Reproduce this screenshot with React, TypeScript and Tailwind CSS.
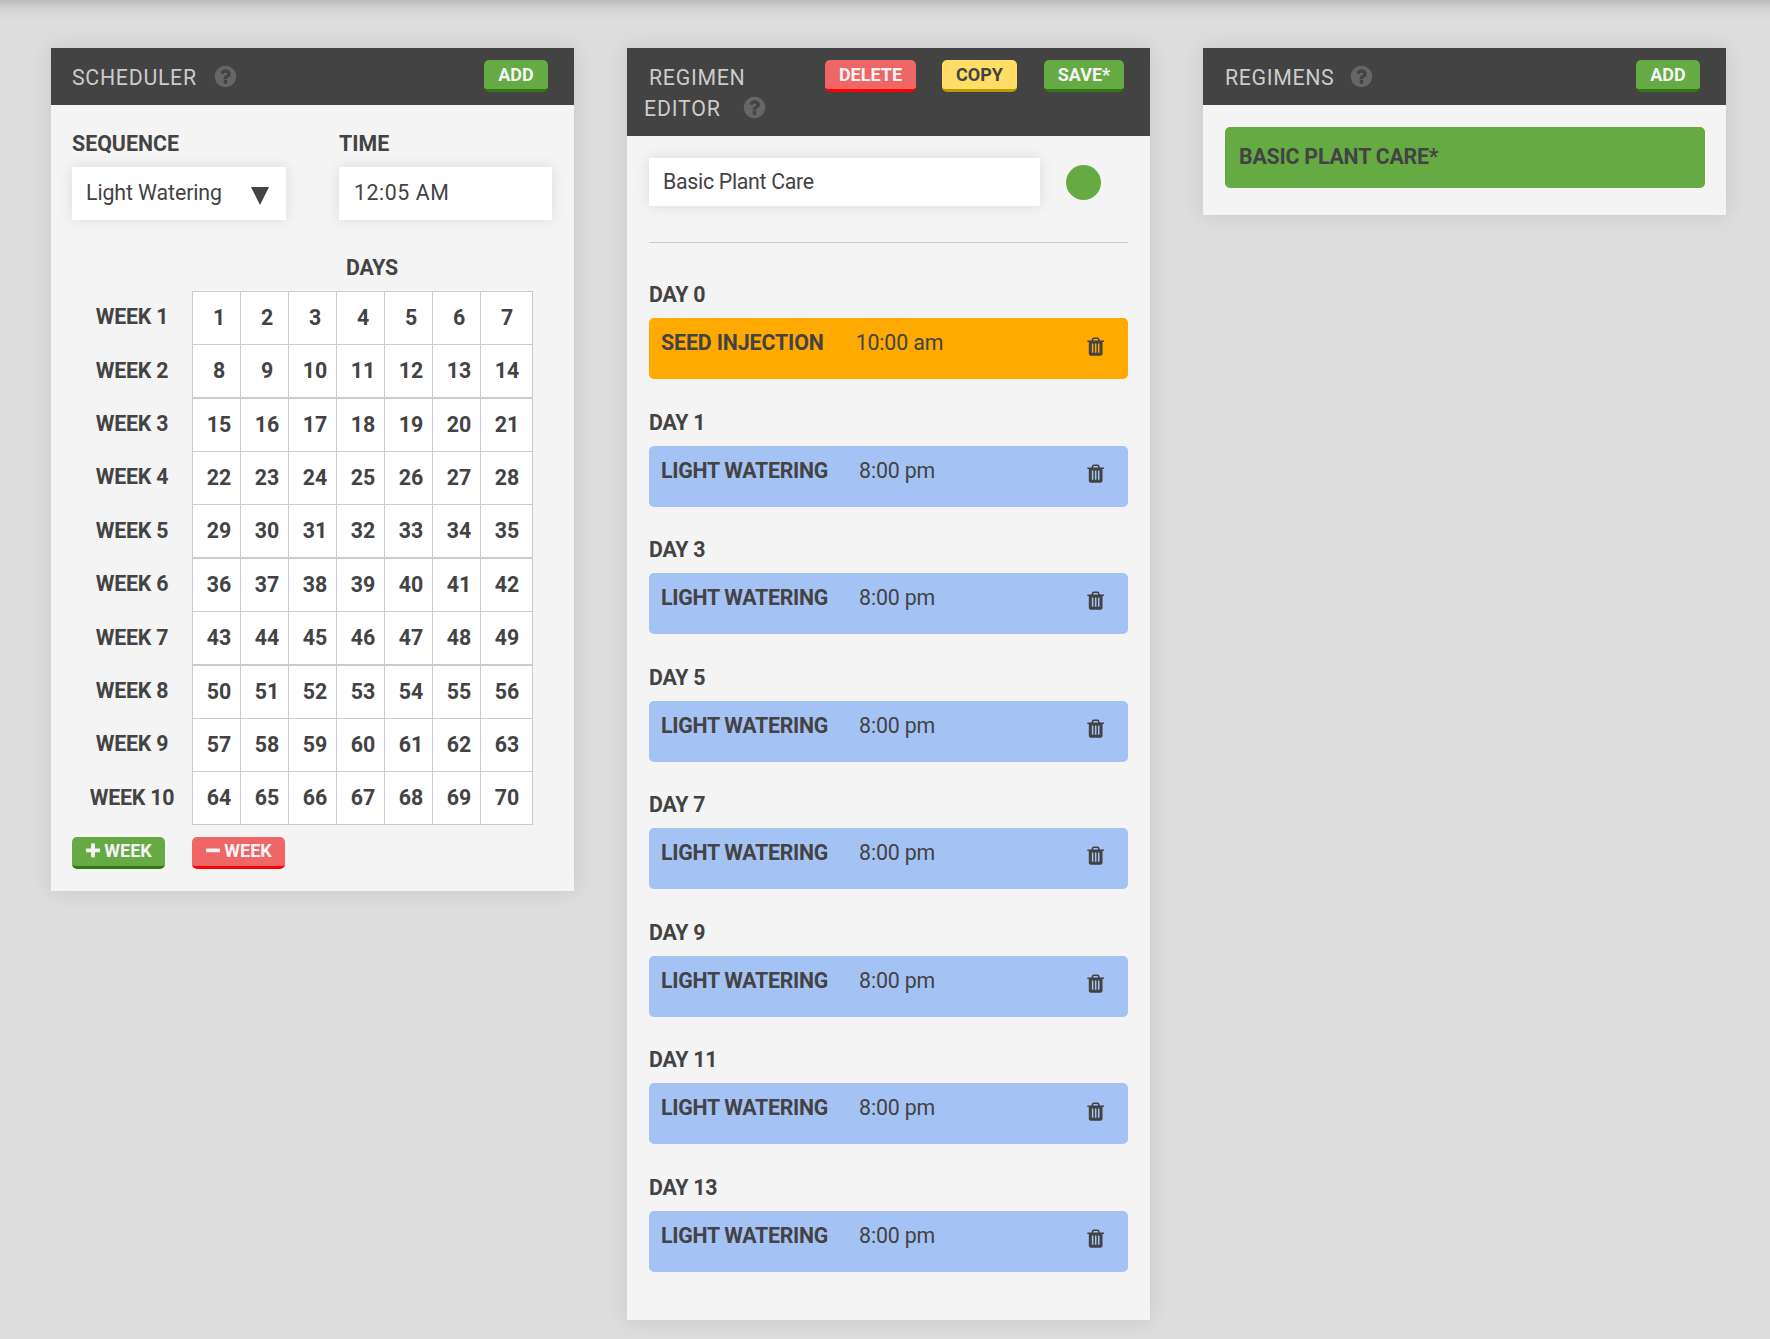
import React from 'react';

const PATHS = {
  help: 'M1024 1376v-192q0-14-9-23t-23-9h-192q-14 0-23 9t-9 23v192q0 14 9 23t23 9h192q14 0 23-9t9-23zm256-672q0-88-55.5-163t-138.5-116-170-41q-243 0-371 213-15 24 8 42l132 100q7 6 19 6 16 0 25-12 53-68 86-92 34-24 86-24 48 0 85.5 26t37.5 59q0 38-20 61t-68 45q-63 28-115.5 86.5t-52.5 125.5v36q0 14 9 23t23 9h192q14 0 23-9t9-23q0-19 21.5-49.5t54.5-49.5q32-18 49-28.5t46-35 44.5-48 28-60.5 12.5-81zm384 192q0 209-103 385.5t-279.5 279.5-385.5 103-385.5-103-279.5-279.5-103-385.5 103-385.5 279.5-279.5 385.5-103 385.5 103 279.5 279.5 103 385.5z',
  trash: 'M704 1376v-704q0-14-9-23t-23-9h-64q-14 0-23 9t-9 23v704q0 14 9 23t23 9h64q14 0 23-9t9-23zm256 0v-704q0-14-9-23t-23-9h-64q-14 0-23 9t-9 23v704q0 14 9 23t23 9h64q14 0 23-9t9-23zm256 0v-704q0-14-9-23t-23-9h-64q-14 0-23 9t-9 23v704q0 14 9 23t23 9h64q14 0 23-9t9-23zm-544-992h448l-48-117q-7-9-17-11h-317q-10 2-17 11zm928 32v64q0 14-9 23t-23 9h-96v948q0 83-47 143.5t-113 60.5h-832q-66 0-113-58.5t-47-141.5v-952h-96q-14 0-23-9t-9-23v-64q0-14 9-23t23-9h309l70-167q15-37 54-63t79-26h320q40 0 79 26t54 63l70 167h309q14 0 23 9t9 23z',
  plus: 'M1600 736v192q0 40-28 68t-68 28h-416v416q0 40-28 68t-68 28h-192q-40 0-68-28t-28-68v-416h-416q-40 0-68-28t-28-68v-192q0-40 28-68t68-28h416v-416q0-40 28-68t68-28h192q40 0 68 28t28 68v416h416q40 0 68 28t28 68z',
  minus: 'M1600 736v192q0 40-28 68t-68 28h-1216q-40 0-68-28t-28-68v-192q0-40 28-68t68-28h1216q40 0 68 28t28 68z',
};

function Icon({ name, className }: { name: keyof typeof PATHS; className: string }) {
  return (
    <svg viewBox="0 0 1792 1792" fill="currentColor" className={`shrink-0 ${className}`}>
      <path d={PATHS[name]} />
    </svg>
  );
}

const TONES = {
  green: 'bg-[#66aa44] text-[#f4f4f4] border-[#337711]',
  red: 'bg-[#ee6666] text-[#f4f4f4] border-[#ff0000]',
  yellow: 'bg-[#ffdd66] text-[#434343] border-[#bb9900]',
};

function Button({ tone, className = '', children }: { tone: keyof typeof TONES; className?: string; children: React.ReactNode }) {
  return (
    <button className={`flex h-8 shrink-0 items-center justify-center rounded-[5px] border-b-[3px] text-[18px] leading-[21px] font-bold whitespace-nowrap ${TONES[tone]} ${className}`}>
      {children}
    </button>
  );
}

function Panel({ header, children, className }: { header: React.ReactNode; children: React.ReactNode; className: string }) {
  return (
    <section className={`w-[523px] shrink-0 bg-[#f4f4f4] shadow-[0_0_20px_rgba(0,0,0,0.1)] ${className}`}>
      {header}
      {children}
    </section>
  );
}

/* Row pitch alternates so that the 53.33px rhythm lands on whole pixels. */
const WEEKS = [
  { row: 'h-[53px]', label: 'pt-[13px]' },
  { row: 'h-[54px]', label: 'pt-[14px]' },
  { row: 'h-[53px]', label: 'pt-[13px]' },
  { row: 'h-[53px]', label: 'pt-[13px]' },
  { row: 'h-[54px]', label: 'pt-[14px]' },
  { row: 'h-[53px]', label: 'pt-[13px]' },
  { row: 'h-[54px]', label: 'pt-[14px]' },
  { row: 'h-[53px]', label: 'pt-[13px]' },
  { row: 'h-[53px]', label: 'pt-[13px]' },
  { row: 'h-[54px]', label: 'pt-[14px]' },
];
const DAYS = Array.from({ length: 7 }, (_, d) => d);

function Scheduler() {
  return (
    <Panel
      className="h-[843px]"
      header={
        <header className="flex h-[57px] bg-[#434343] pt-3 pr-[26px] pl-[21px]">
          <h3 className="pt-[5px] text-[21.33px] leading-[25px] tracking-[0.7px] text-[#cccccc]">SCHEDULER</h3>
          <Icon name="help" className="mt-[4px] ml-[16px] size-[25px] text-[#666666]" />
          <Button tone="green" className="ml-auto w-16">ADD</Button>
        </header>
      }
    >
      <div className="flex gap-[53px] px-[21px] pt-[26px]">
        <div className="w-[214px]">
          <label className="block text-[21.33px] leading-[25px] font-bold">SEQUENCE</label>
          <div className="mt-[11px] flex h-[53px] items-center justify-between bg-white pr-[17px] pl-[14px] shadow-[0_0_13px_rgba(0,0,0,0.1)]">
            <span className="pb-[2px] text-[21.33px] leading-[25px] tracking-[-0.1px]">Light Watering</span>
            <svg viewBox="0 0 18 18" fill="currentColor" className="mt-1 size-[18px]"><path d="M0 0h18L9 18z" /></svg>
          </div>
        </div>
        <div className="w-[213px]">
          <label className="block text-[21.33px] leading-[25px] font-bold">TIME</label>
          <div className="mt-[11px] flex h-[53px] items-center bg-white pl-[15px] shadow-[0_0_13px_rgba(0,0,0,0.1)]">
            <span className="pb-[2px] text-[21.33px] leading-[25px] tracking-[0.55px]">12:05 AM</span>
          </div>
        </div>
      </div>
      <div className="mt-[35px] pl-[141px]">
        <div className="w-[360px] text-center text-[21.33px] leading-[25px] font-bold tracking-[-0.2px]">DAYS</div>
      </div>
      <div className="mt-[11px] flex flex-col">
        {WEEKS.map((week, w) => (
          <div key={w} className={`flex pl-[21px] text-[21.33px] leading-[25px] font-bold ${week.row}`}>
            <div className={`w-[120px] text-center tracking-[-0.25px] ${week.label}`}>WEEK {w + 1}</div>
            {DAYS.map((d) => (
              <div
                key={d}
                className="h-[54px] w-12 border border-r-0 border-[#cccccc] bg-white pt-[13px] pl-[5px] text-center last:w-[53px] last:border-r last:pr-[4px]"
              >
                {w * 7 + d + 1}
              </div>
            ))}
          </div>
        ))}
      </div>
      <div className="mt-[12px] flex gap-[27px] pl-[21px]">
        <Button tone="green" className="w-[93px] pb-[2px]">
          <Icon name="plus" className="mr-[2px] -ml-px size-[18px]" />WEEK
        </Button>
        <Button tone="red" className="w-[93px] pb-[2px]">
          <Icon name="minus" className="mr-[2px] -ml-px size-[18px]" />WEEK
        </Button>
      </div>
    </Panel>
  );
}

const ITEMS = [
  { day: 0, name: 'SEED INJECTION', time: '10:00 am' },
  ...[1, 3, 5, 7, 9, 11, 13].map((day) => ({ day, name: 'LIGHT WATERING', time: '8:00 pm' })),
];

function Editor() {
  return (
    <Panel
      className="h-[1272px]"
      header={
        <header className="flex h-[88px] bg-[#434343] pt-3 pr-[26px] pl-[17px]">
          <h3 className="w-[140px] pt-[2px] text-[21.33px] leading-[31px] tracking-[0.7px] text-[#cccccc]">
            <span className="block pl-[5px]">REGIMEN</span>
            <span className="flex tracking-[0.8px]">EDITOR<Icon name="help" className="mt-[1.5px] ml-[21.4px] size-[25px] text-[#666666]" /></span>
          </h3>
          <div className="ml-auto flex">
            <Button tone="red" className="w-[91px]">DELETE</Button>
            <Button tone="yellow" className="ml-[26px] w-[75px]">COPY</Button>
            <Button tone="green" className="ml-[27px] w-20">SAVE*</Button>
          </div>
        </header>
      }
    >
      <div className="px-[22px] pt-[22px]">
        <div className="flex items-center">
          <div className="flex h-12 w-[391px] items-center bg-white pl-[14px] text-[21.33px] tracking-[-0.3px] shadow-[0_0_13px_rgba(0,0,0,0.1)]">Basic Plant Care</div>
          <div className="ml-[26px] size-[35px] rounded-full bg-[#66aa44]" />
        </div>
        <div className="mt-9 h-px bg-[#cccccc]" />
        <div className="pt-[39px]">
          {ITEMS.map((it) => (
            <div key={it.day} className="mb-[30.56px]">
              <div className="text-[21.33px] leading-[25px] font-bold tracking-[-0.2px]">DAY {it.day}</div>
              <div className={`mt-[11px] flex h-[61px] rounded-[5px] pt-3 pr-[22px] pl-[12px] text-[21.33px] leading-[25px] ${it.day === 0 ? 'bg-[#ffaa00] tracking-[-0.12px]' : 'bg-[#a4c2f4] tracking-[-0.28px]'}`}>
                <span className="font-bold">{it.name}</span>
                <span className={it.day === 0 ? 'ml-8 tracking-[-0.15px]' : 'ml-[31px] tracking-[-0.15px]'}>{it.time}</span>
                <Icon name="trash" className={it.day === 0 ? 'mt-[6px] ml-auto size-[21.33px]' : 'mt-[5.3px] ml-auto size-[21.33px]'} />
              </div>
            </div>
          ))}
        </div>
      </div>
    </Panel>
  );
}

function Regimens() {
  return (
    <Panel
      className="h-[167px]"
      header={
        <header className="flex h-[57px] bg-[#434343] pt-3 pr-[26px] pl-[22px]">
          <h3 className="pt-[5px] text-[21.33px] leading-[25px] tracking-[0.65px] text-[#cccccc]">REGIMENS</h3>
          <Icon name="help" className="mt-[4px] ml-[15px] size-[25px] text-[#666666]" />
          <Button tone="green" className="ml-auto w-16">ADD</Button>
        </header>
      }
    >
      <div className="pt-[22px] pr-[21px] pl-[22px]">
        <div className="flex h-[61px] items-center rounded-[5px] bg-[#66aa44] pb-px pl-[14px] text-[21.33px] font-bold tracking-[-0.2px]">BASIC PLANT CARE*</div>
      </div>
    </Panel>
  );
}

export default function App() {
  return (
    <div className="h-[1339px] w-[1770px] overflow-hidden bg-[#dddddd] font-['Roboto',sans-serif] text-[#434343]">
      <div className="h-5 bg-linear-to-b from-[#bbbbbb] via-[#d5d5d5] to-[#dddddd]" />
      <main className="flex items-start gap-[53px] pt-7 pl-[51px]">
        <Scheduler />
        <Editor />
        <Regimens />
      </main>
    </div>
  );
}
